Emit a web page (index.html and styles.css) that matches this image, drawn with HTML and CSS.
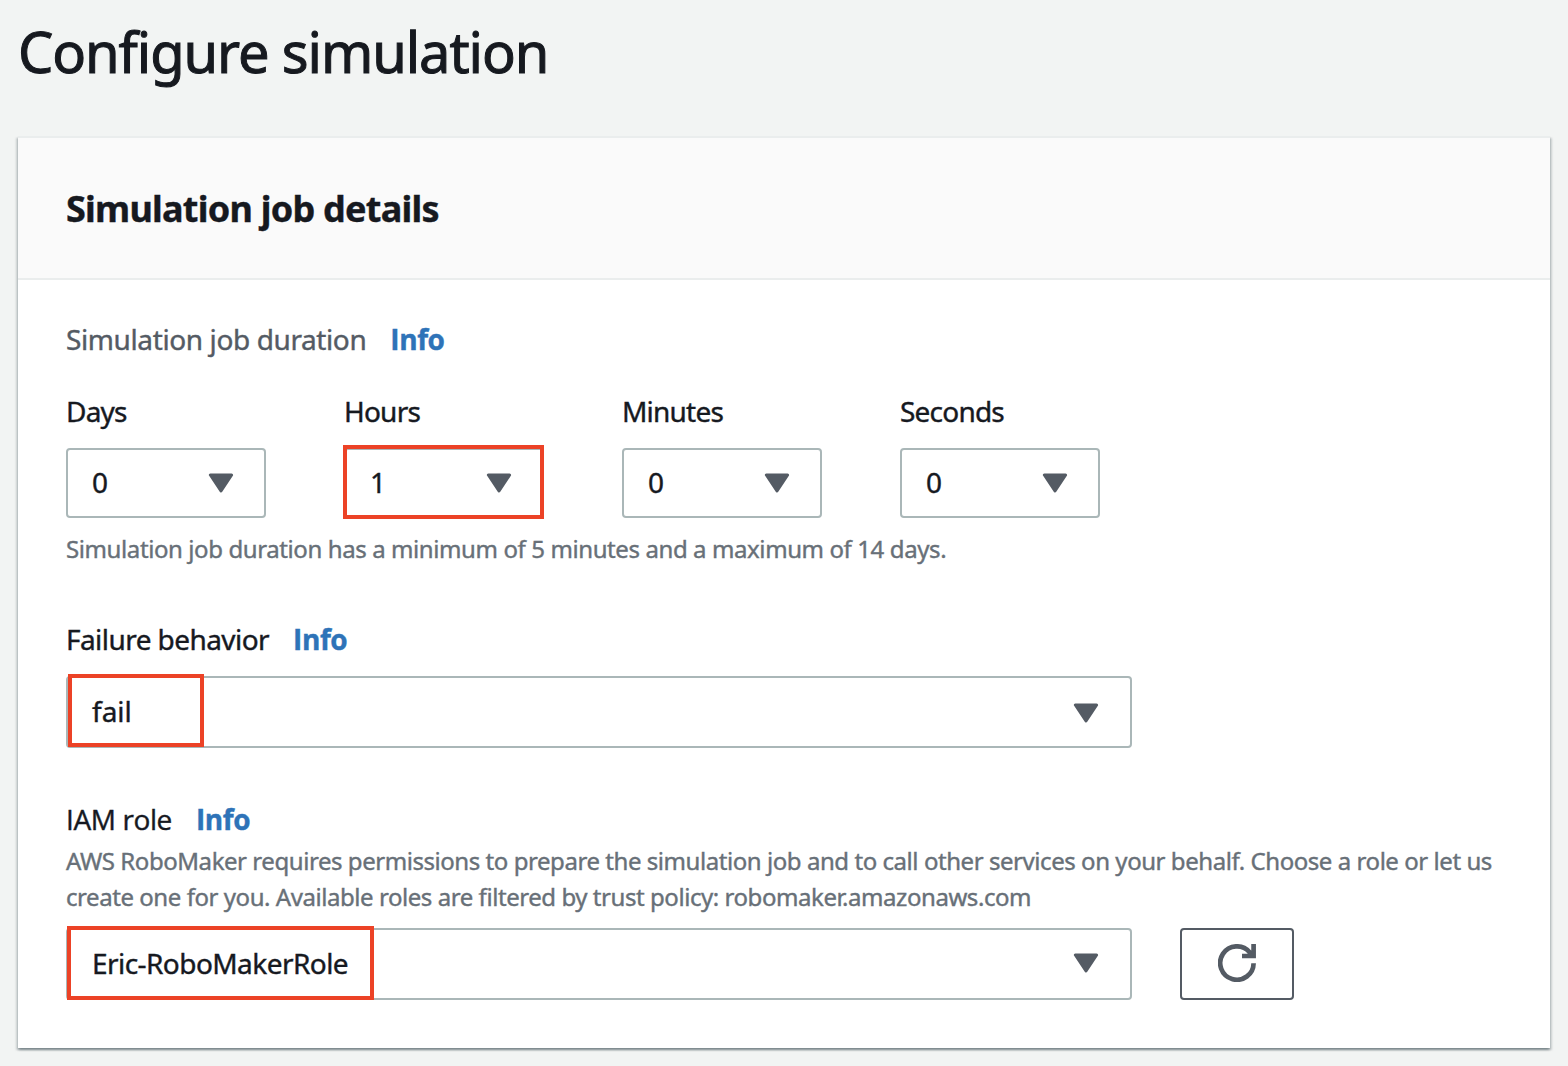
FILE: index.html
```html
<!DOCTYPE html>
<html lang="en">
<head>
<meta charset="utf-8">
<title>Configure simulation</title>
<link rel="stylesheet" href="styles.css">
</head>
<body>
<svg class="sprite" aria-hidden="true">
  <symbol id="caret" viewBox="0 0 26 20"><path d="M2.4 2h21.2L13 18z" fill="currentColor" stroke="currentColor" stroke-width="3" stroke-linejoin="round"/></symbol>
  <symbol id="refresh" viewBox="0 0 38 38"><path d="M35.6 19.2A16.7 16.7 0 1 1 31.6 8.2L34 12M24 12h11.6V0" fill="none" stroke="currentColor" stroke-width="4.7"/></symbol>
</svg>
<h1 class="page-title">Configure simulation</h1>
<main class="card">
  <header class="card-header"><h2 class="card-title">Simulation job details</h2></header>
  <div class="card-body">
    <section class="field duration">
      <div class="label muted"><span>Simulation job duration</span><a class="info">Info</a></div>
      <div class="units">
        <div class="unit"><div class="label">Days</div><div class="select small"><span>0</span><svg class="caret"><use href="#caret"/></svg></div></div>
        <div class="unit"><div class="label">Hours</div><div class="select small"><span>1</span><svg class="caret"><use href="#caret"/></svg><i class="mark mark-hours"></i></div></div>
        <div class="unit"><div class="label">Minutes</div><div class="select small"><span>0</span><svg class="caret"><use href="#caret"/></svg></div></div>
        <div class="unit"><div class="label">Seconds</div><div class="select small"><span>0</span><svg class="caret"><use href="#caret"/></svg></div></div>
      </div>
      <p class="hint">Simulation job duration has a minimum of 5 minutes and a maximum of 14 days.</p>
    </section>
    <section class="field failure">
      <div class="label"><span>Failure behavior</span><a class="info">Info</a></div>
      <div class="select wide"><span class="value-fail">fail</span><svg class="caret"><use href="#caret"/></svg><i class="mark mark-fail"></i></div>
    </section>
    <section class="field role">
      <div class="label"><span class="role-label">IAM role</span><a class="info">Info</a></div>
      <p class="hint">AWS RoboMaker requires permissions to prepare the simulation job and to call other services on your behalf. Choose a role or let us<br>create one for you. Available roles are filtered by trust policy: robomaker.amazonaws.com</p>
      <div class="row">
        <div class="select wide"><span>Eric-RoboMakerRole</span><svg class="caret"><use href="#caret"/></svg><i class="mark mark-role"></i></div>
        <button class="refresh" aria-label="Refresh"><svg><use href="#refresh"/></svg></button>
      </div>
    </section>
  </div>
</main>
</body>
</html>
```
FILE: styles.css
```css
* { box-sizing: border-box; }
body {
  margin: 0;
  height: 1066px;
  padding: 16px 18px 0;
  overflow: hidden;
  background: #f2f4f3;
  color: #16191f;
  font: 28px/44px "Noto Sans", "Open Sans", sans-serif;
  letter-spacing: -0.02em;
  -webkit-text-stroke: 0.4px currentColor;
}
.sprite { position: absolute; width: 0; height: 0; }
svg { -webkit-text-stroke: 0; }
h1, h2, p { margin: 0; }
.page-title {
  height: 120px;
  font-size: 56px;
  line-height: 70px;
  font-weight: 400;
  letter-spacing: -0.0195em;
  -webkit-text-stroke-width: 1px;
}
.card {
  height: 912px;
  background: #fff;
  border-top: 2px solid #eaeded;
  box-shadow: 0 2px 2px rgba(0, 28, 36, 0.3), 2px 2px 2px rgba(0, 28, 36, 0.15), -2px 2px 2px rgba(0, 28, 36, 0.15);
}
.card-header {
  height: 142px;
  padding: 48px 48px 0;
  background: #fafafa;
  border-bottom: 2px solid #eaeded;
}
.card-title {
  font-size: 36px;
  line-height: 46px;
  font-weight: 700;
  letter-spacing: -0.021em;
}
.card-body { padding: 37px 48px 48px; }
.label { display: flex; gap: 24px; height: 44px; white-space: nowrap; }
.unit .label { letter-spacing: -0.028em; }
.muted { color: #545b64; letter-spacing: -0.014em; }
.info {
  color: #2e73b8;
  font-family: "Open Sans", "Noto Sans", sans-serif;
  font-weight: 700;
  letter-spacing: -0.015em;
}
.role-label { font-family: "Open Sans", "Noto Sans", sans-serif; letter-spacing: -0.014em; }
.units { display: flex; gap: 78px; margin-top: 28px; }
.unit { width: 200px; }
.select {
  position: relative;
  display: flex;
  align-items: center;
  justify-content: space-between;
  height: 72px;
  margin-top: 15px;
  padding: 0 31px 0 24px;
  border: 2px solid #aab7b8;
  border-radius: 4px;
  white-space: nowrap;
}
.select span { padding-bottom: 2px; }
.small { height: 70px; padding-right: 30px; }
.wide { width: 1066px; }
.caret { width: 26px; height: 20px; color: #545b64; }
.value-fail { letter-spacing: 0; }
.failure .caret { margin-top: 2px; }
.role .caret { margin-bottom: 2px; }
.hint {
  color: #687078;
  font-size: 24px;
  line-height: 36px;
  letter-spacing: -0.0168em;
  white-space: nowrap;
}
.duration .hint { margin-top: 13px; }
.failure { margin-top: 50px; }
.role { margin-top: 49px; }
.role .hint { margin-top: 2px; letter-spacing: -0.0185em; }
.row { display: flex; gap: 48px; margin-top: 13px; }
.row .select { margin-top: 0; }
.refresh {
  display: flex;
  align-items: center;
  justify-content: center;
  width: 114px;
  height: 72px;
  padding: 0 0 2px;
  border: 2px solid #545b64;
  border-radius: 4px;
  background: #fff;
  color: #545b64;
}
.refresh svg { width: 38px; height: 38px; }
/* Red callouts drawn over the selects */
.mark { position: absolute; border: 4px solid #ec4226; }
.mark-hours { left: -3px; top: -5px; width: 201px; height: 74px; }
.mark-fail { left: 0; top: -4px; width: 136px; height: 73px; }
.mark-role { left: -1px; top: -4px; width: 307px; height: 74px; }
```
